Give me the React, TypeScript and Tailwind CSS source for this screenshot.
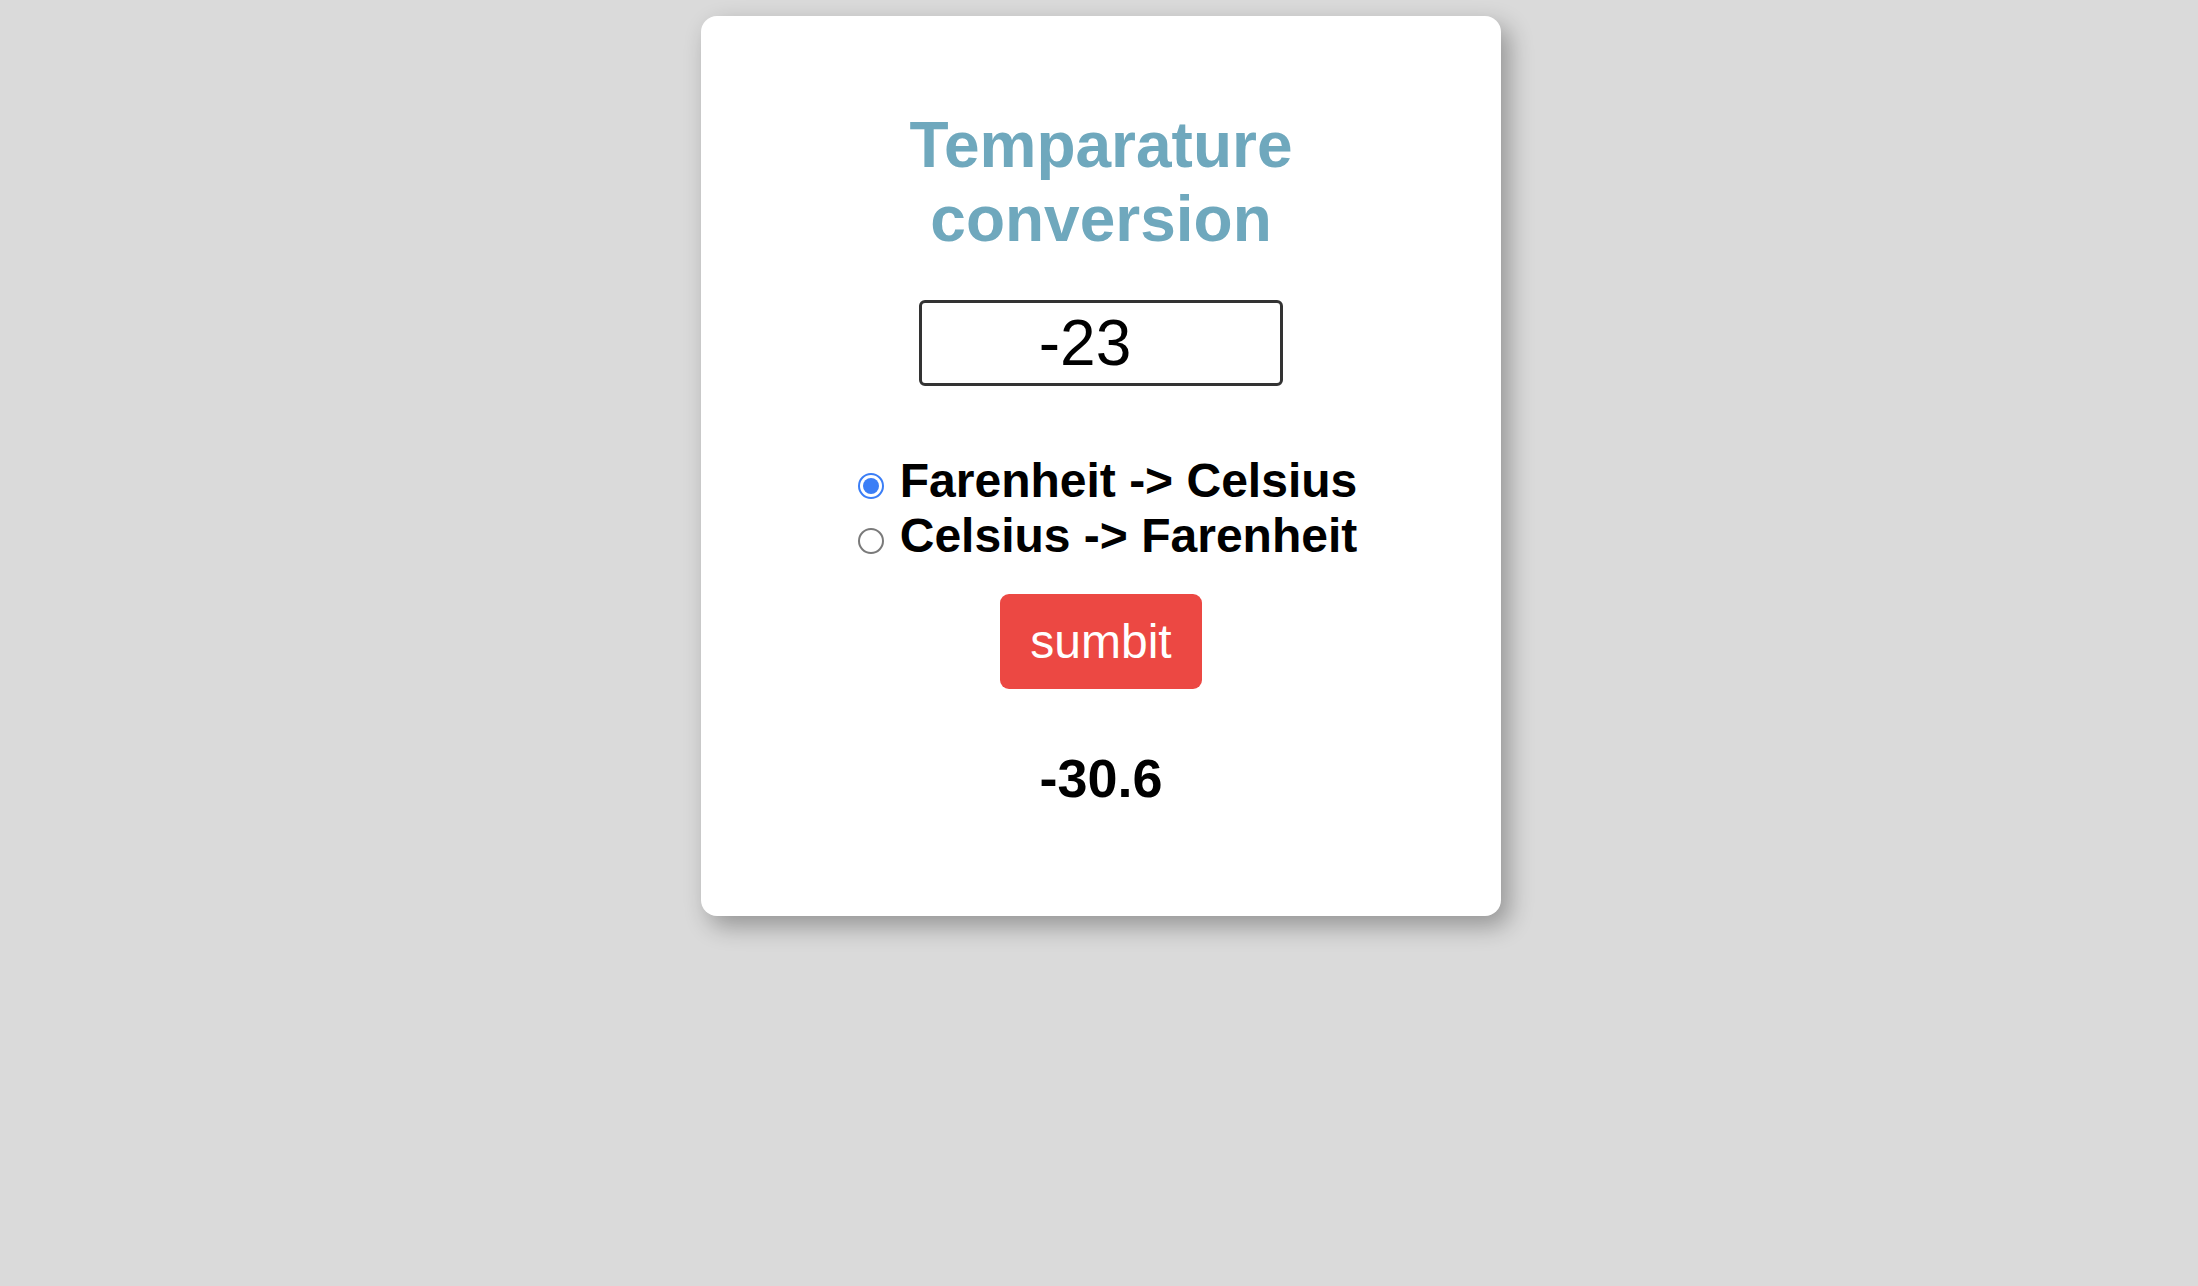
import { useState } from 'react';

export default function App() {
  const [value, setValue] = useState('-23');
  const [mode, setMode] = useState<'f2c' | 'c2f'>('f2c');
  const [result, setResult] = useState('-30.6');

  function handleSubmit(e: React.FormEvent) {
    e.preventDefault();
    const n = parseFloat(value);
    if (isNaN(n)) return;
    const out = mode === 'f2c' ? ((n - 32) * 5) / 9 : (n * 9) / 5 + 32;
    setResult(out.toFixed(1));
  }

  const options = [
    { id: 'f2c' as const, label: 'Farenheit -> Celsius' },
    { id: 'c2f' as const, label: 'Celsius -> Farenheit' },
  ];

  return (
    <div className="min-h-screen bg-[#dadada] pt-[16px] pl-[4px] font-['Liberation_Sans',Arial,sans-serif]">
      <form
        onSubmit={handleSubmit}
        className="mx-auto flex w-[800px] flex-col items-center rounded-[16px] bg-white pt-[93px] pb-[107px] shadow-[8px_10px_24px_rgba(0,0,0,0.32)]"
      >
        <h1 className="w-[400px] text-center text-[64px] font-bold leading-[1.15] text-[#6fa8bd]">
          Temparature conversion
        </h1>

        <input
          type="text"
          value={value}
          onChange={e => setValue(e.target.value)}
          className="mt-[44px] h-[86px] w-[364px] rounded-[6px] border-[3px] border-[#333333] pr-[32px] text-center text-[64px] leading-[1.15] text-black outline-none"
        />

        <div className="mt-[67px] ml-[8px] flex flex-col">
          {options.map(opt => {
            const checked = mode === opt.id;
            return (
              <label key={opt.id} className="flex cursor-pointer items-start">
                <input
                  type="radio"
                  name="mode"
                  checked={checked}
                  onChange={() => setMode(opt.id)}
                  className="sr-only"
                />
                <span
                  className={`ml-[5px] mt-[20px] flex h-[26px] w-[26px] items-center justify-center rounded-full border-2 ${
                    checked ? 'border-[#3b7ef6]' : 'border-[#7a7a7a]'
                  }`}
                >
                  {checked && <span className="h-[16px] w-[16px] rounded-full bg-[#3b7ef6]" />}
                </span>
                <span className="ml-[16px] text-[48px] font-bold leading-[1.15] text-black">{opt.label}</span>
              </label>
            );
          })}
        </div>

        <button
          type="submit"
          className="mt-[30px] rounded-[9px] bg-[#ec4843] px-[30px] py-[20px] text-[48px] leading-[1.15] text-white"
        >
          sumbit
        </button>

        <h2 className="mt-[58px] text-[54px] font-bold leading-[1.15] text-black">{result}</h2>
      </form>
    </div>
  );
}
